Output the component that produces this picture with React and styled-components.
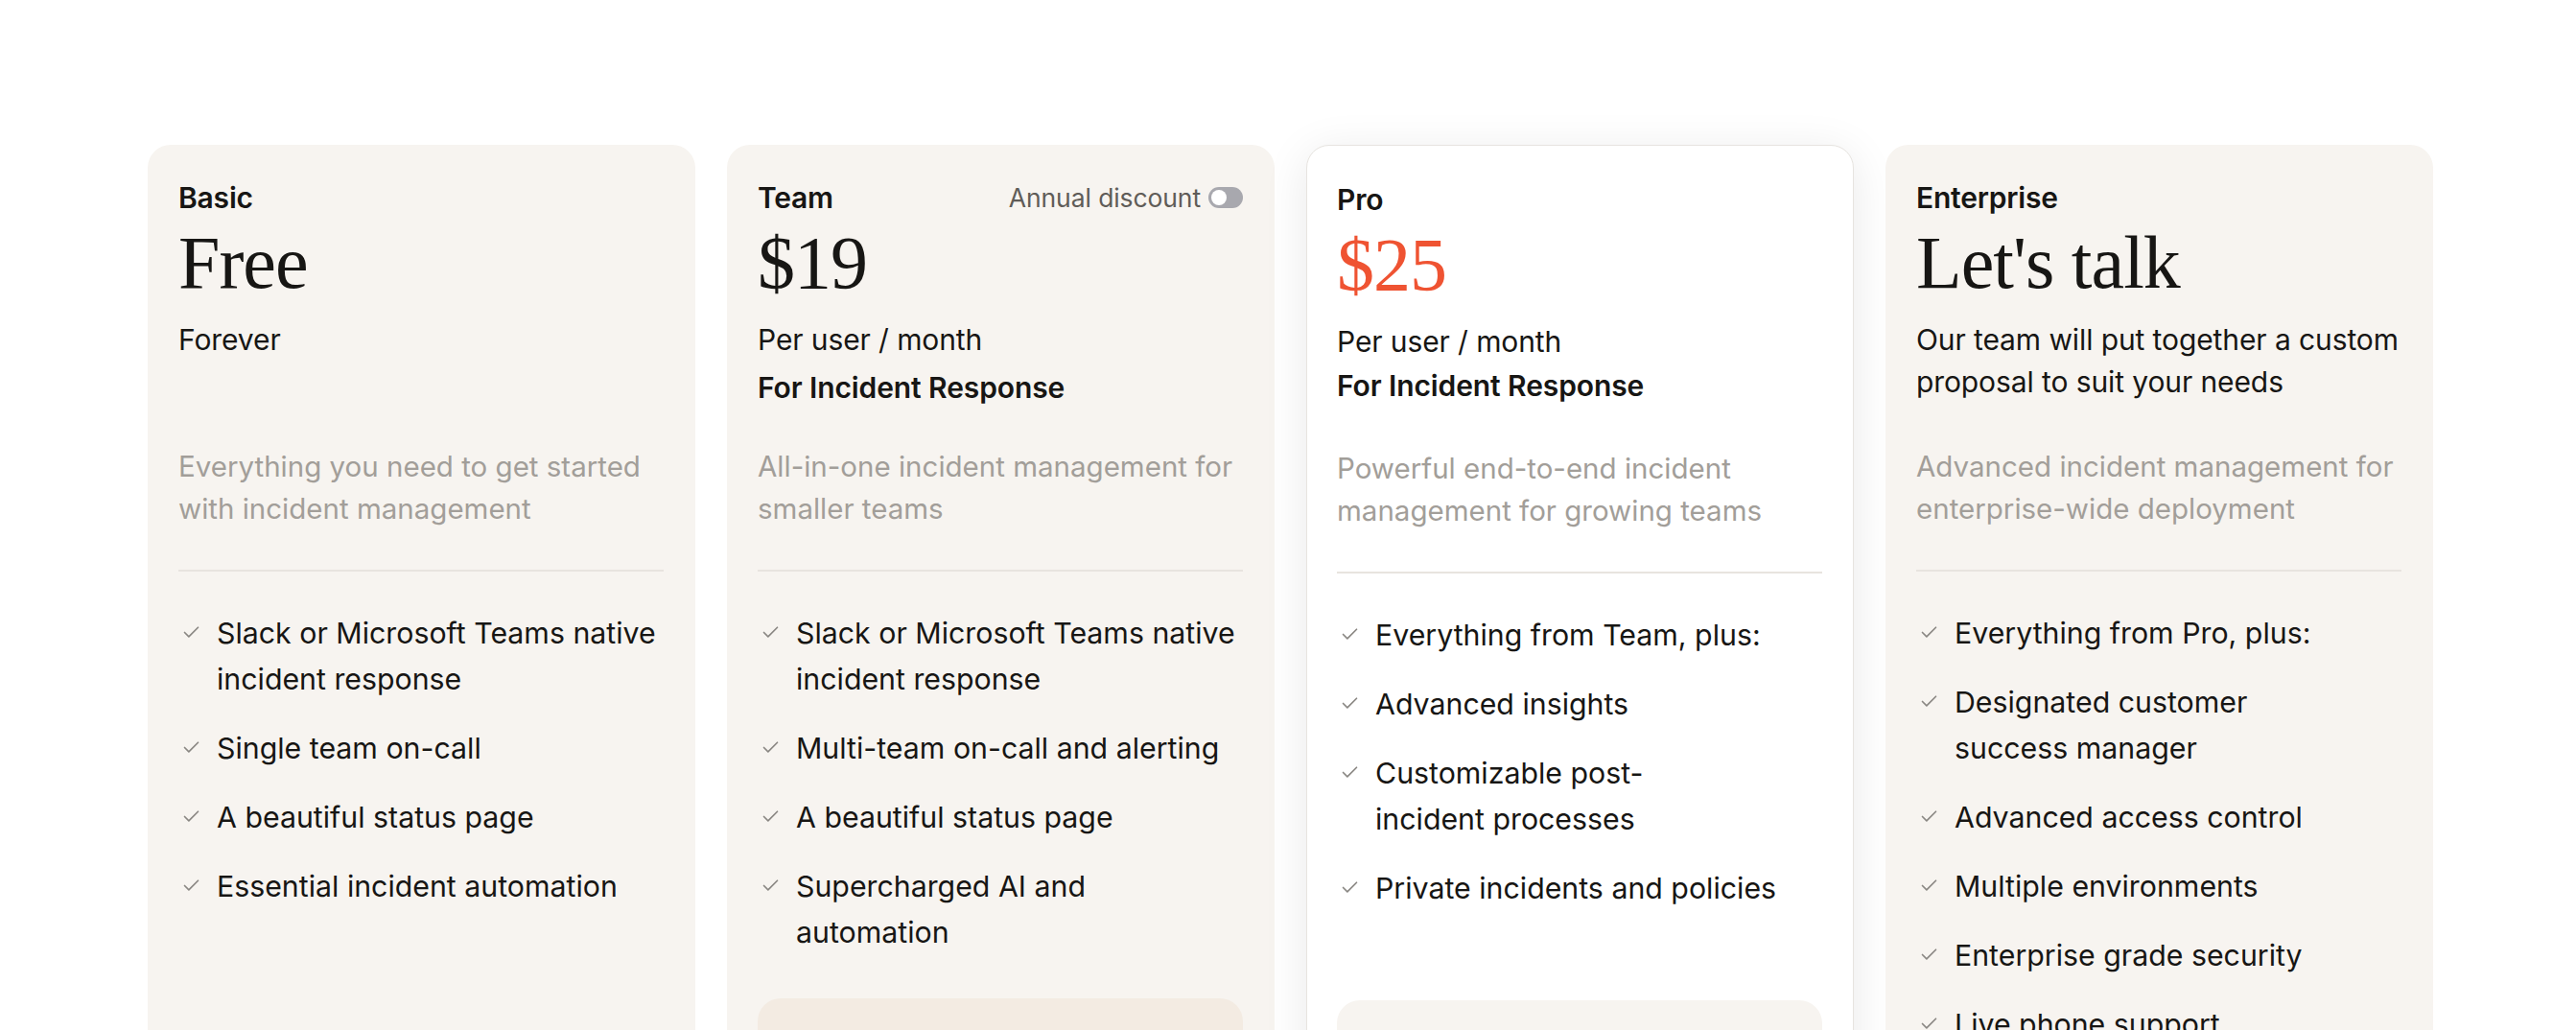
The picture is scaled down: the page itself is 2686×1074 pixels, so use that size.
import React from 'react';
import styled, { createGlobalStyle } from 'styled-components';
import { Check } from 'lucide-react';

const GlobalStyle = createGlobalStyle`
  html, body {
    margin: 0;
    padding: 0;
    background: #ffffff;
    overflow: hidden;
  }

  body {
    font-family: Inter, "Noto Sans", sans-serif;
    color: #171614;
    -webkit-font-smoothing: antialiased;
  }
`;

const PricingSection = styled.section`
  padding: 151px 149px 0 154px;
`;

const PlansGrid = styled.div`
  display: grid;
  grid-template-columns: repeat(4, 1fr);
  gap: 33px;
  align-items: start;
`;

const PlanCard = styled.div`
  display: flex;
  flex-direction: column;
  padding: ${props => (props.$highlighted ? '34px 32px 40px 31px' : '32px 32px 40px 31px')};
  border-radius: 24px;
  background: ${props => (props.$highlighted ? '#ffffff' : '#f7f4f0')};
  border: 1px solid ${props => (props.$highlighted ? '#e7e4e0' : 'transparent')};
  box-shadow: ${props => (props.$highlighted ? '0 8px 48px rgba(20, 16, 10, 0.09)' : 'none')};
  min-height: 1100px;
`;

const PlanHeader = styled.div`
  display: flex;
  align-items: center;
  justify-content: space-between;
  height: 44px;
`;

const PlanName = styled.h3`
  margin: 0;
  font-size: 30px;
  font-weight: 600;
  line-height: 44px;
  letter-spacing: -0.2px;
`;

const DiscountToggle = styled.label`
  display: flex;
  align-items: center;
  gap: 8px;
  font-size: 26.5px;
  color: #5f5c58;
  letter-spacing: -0.1px;
`;

const ToggleTrack = styled.span`
  position: relative;
  display: inline-block;
  width: 36px;
  height: 22px;
  border-radius: 11px;
  background: #a8a8ae;

  &::after {
    content: '';
    position: absolute;
    top: 3px;
    left: 3px;
    width: 16px;
    height: 16px;
    border-radius: 50%;
    background: #ffffff;
  }
`;

const Price = styled.div`
  margin-top: 6px;
  font-family: "Liberation Serif", "Times New Roman", serif;
  font-size: 78px;
  line-height: 80px;
  letter-spacing: -1px;
  color: ${props => (props.$accent ? '#ef5332' : '#171614')};
`;

const PriceDetails = styled.div`
  margin-top: 18px;
  min-height: 96px;
  display: flex;
  flex-direction: column;
  gap: ${props => (props.$tight ? '2px' : '6px')};
`;

const PriceNote = styled.p`
  margin: 0;
  font-size: 30px;
  line-height: 44px;
  font-weight: ${props => (props.$strong ? 600 : 400)};
  letter-spacing: -0.1px;
  white-space: pre;
`;

const Description = styled.p`
  margin: 36px 0 0;
  font-size: 29.5px;
  line-height: 44px;
  color: #a29e99;
  white-space: pre;
`;

const Divider = styled.hr`
  margin: 42px 0 0;
  border: none;
  height: 2px;
  background: #e8e4df;
`;

const FeatureList = styled.ul`
  list-style: none;
  margin: 40px 0 0;
  padding: 0;
  display: flex;
  flex-direction: column;
  gap: 24px;
  min-height: 360px;
`;

const FeatureItem = styled.li`
  display: flex;
  align-items: flex-start;
  gap: 16px;
  font-size: 30.3px;
  line-height: 48px;
  white-space: pre;

  svg {
    flex-shrink: 0;
    margin-top: 13px;
    margin-left: 3px;
    color: #8a8783;
  }
`;

const PlanButton = styled.button`
  margin-top: 45px;
  width: 100%;
  height: 96px;
  border: none;
  border-radius: 24px;
  background: ${props => props.$bg};
  font-family: Inter, sans-serif;
  font-size: 28px;
  font-weight: 600;
  color: #171614;
  padding-top: 20px;
`;

const plans = [
  {
    name: 'Basic',
    price: 'Free',
    notes: ['Forever'],
    description: 'Everything you need to get started\nwith incident management',
    features: [
      'Slack or Microsoft Teams native\nincident response',
      'Single team on-call',
      'A beautiful status page',
      'Essential incident automation',
    ],
  },
  {
    name: 'Team',
    price: '$19',
    toggle: true,
    notes: ['Per user / month'],
    strongNote: 'For Incident Response',
    description: 'All-in-one incident management for\nsmaller teams',
    features: [
      'Slack or Microsoft Teams native\nincident response',
      'Multi-team on-call and alerting',
      'A beautiful status page',
      'Supercharged AI and\nautomation',
    ],
    cta: 'Start free trial',
    ctaBg: '#f3ebe2',
  },
  {
    name: 'Pro',
    price: '$25',
    accent: true,
    highlighted: true,
    notes: ['Per user / month'],
    strongNote: 'For Incident Response',
    description: 'Powerful end-to-end incident\nmanagement for growing teams',
    features: [
      'Everything from Team, plus:',
      'Advanced insights',
      'Customizable post-\nincident processes',
      'Private incidents and policies',
    ],
    cta: 'Start free trial',
    ctaBg: '#f7f4f0',
  },
  {
    name: 'Enterprise',
    price: "Let's talk",
    notes: ['Our team will put together a custom\nproposal to suit your needs'],
    description: 'Advanced incident management for\nenterprise-wide deployment',
    features: [
      'Everything from Pro, plus:',
      'Designated customer\nsuccess manager',
      'Advanced access control',
      'Multiple environments',
      'Enterprise grade security',
      'Live phone support',
    ],
    cta: 'Get in touch',
    ctaBg: '#efe8df',
  },
];

const App = () => {
  return (
    <>
      <GlobalStyle />
      <PricingSection>
        <PlansGrid>
          {plans.map(plan => (
            <PlanCard key={plan.name} $highlighted={plan.highlighted}>
              <PlanHeader>
                <PlanName>{plan.name}</PlanName>
                {plan.toggle && (
                  <DiscountToggle>
                    Annual discount
                    <ToggleTrack />
                  </DiscountToggle>
                )}
              </PlanHeader>
              <Price $accent={plan.accent}>{plan.price}</Price>
              <PriceDetails $tight={plan.highlighted}>
                {plan.notes.map(note => (
                  <PriceNote key={note}>{note}</PriceNote>
                ))}
                {plan.strongNote && <PriceNote $strong>{plan.strongNote}</PriceNote>}
              </PriceDetails>
              <Description>{plan.description}</Description>
              <Divider />
              <FeatureList>
                {plan.features.map(feature => (
                  <FeatureItem key={feature}>
                    <Check size={21} strokeWidth={1.9} />
                    {feature}
                  </FeatureItem>
                ))}
              </FeatureList>
              {plan.cta && <PlanButton $bg={plan.ctaBg}>{plan.cta}</PlanButton>}
            </PlanCard>
          ))}
        </PlansGrid>
      </PricingSection>
    </>
  );
};

export default App;
